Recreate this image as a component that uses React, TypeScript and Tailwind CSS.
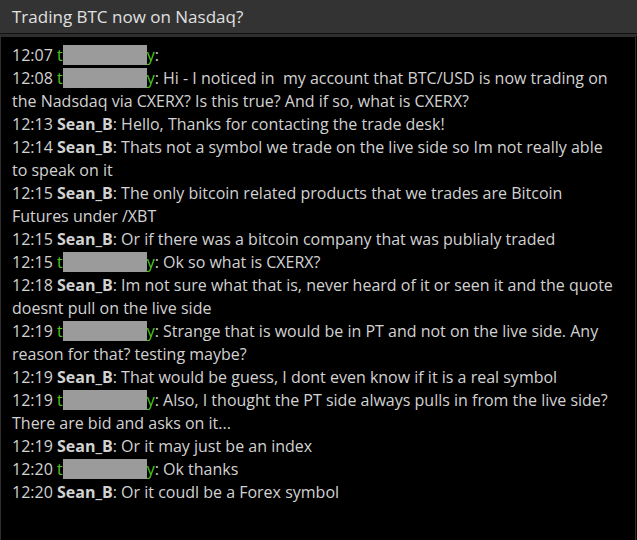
import React from "react";

type Msg = { t: string; who: "u" | "s"; text: string };

const msgs: Msg[] = [
  { t: "12:07", who: "u", text: "" },
  { t: "12:08", who: "u", text: "Hi - I noticed in\u00a0 my account that BTC/USD is now trading on the Nadsdaq via CXERX? Is this true? And if so, what is CXERX?" },
  { t: "12:13", who: "s", text: "Hello, Thanks for contacting the trade desk!" },
  { t: "12:14", who: "s", text: "Thats not a symbol we trade on the live side so Im not really able to speak on it" },
  { t: "12:15", who: "s", text: "The only bitcoin related products that we trades are Bitcoin Futures under /XBT" },
  { t: "12:15", who: "s", text: "Or if there was a bitcoin company that was publialy traded" },
  { t: "12:15", who: "u", text: "Ok so what is CXERX?" },
  { t: "12:18", who: "s", text: "Im not sure what that is, never heard of it or seen it and the quote doesnt pull on the live side" },
  { t: "12:19", who: "u", text: "Strange that is would be in PT and not on the live side. Any reason for that? testing maybe?" },
  { t: "12:19", who: "s", text: "That would be guess, I dont even know if it is a real symbol" },
  { t: "12:19", who: "u", text: "Also, I thought the PT side always pulls in from the live side? There are bid and asks on it..." },
  { t: "12:19", who: "s", text: "Or it may just be an index" },
  { t: "12:20", who: "u", text: "Ok thanks" },
  { t: "12:20", who: "s", text: "Or it coudl be a Forex symbol" },
];

export default function App() {
  return (
    <div
      className="w-[637px] h-[540px] flex flex-col bg-black overflow-hidden"
      style={{ fontFamily: '"Open Sans", "Noto Sans", sans-serif' }}
    >
      <div className="h-[33px] bg-[#333333] flex items-center pl-[12px] text-[17px] text-[#e0e0e0] shrink-0">
        Trading BTC now on Nasdaq?
      </div>
      <div className="h-[1px] bg-[#111111] shrink-0" />
      <div className="h-[2px] bg-[#2e2e2e] shrink-0" />
      <div className="flex-1 bg-black border-t border-l border-r border-[#2e2e2e] mr-[1px] pl-[11px] pr-[14px] pt-[7px] text-[16px] leading-[23px] text-[#d2d2d2]">
        {msgs.map((m, i) => (
          <div key={i}>
            <span>{m.t} </span>
            {m.who === "u" ? (
              <span className="text-[#4cc81e]">
                t
                <span className="inline-block w-[84px] h-[20px] bg-[#9b9b9b] align-[-4px]" />
                y
              </span>
            ) : (
              <span className="font-bold">Sean_B</span>
            )}
            <span>: {m.text}</span>
          </div>
        ))}
      </div>
    </div>
  );
}
